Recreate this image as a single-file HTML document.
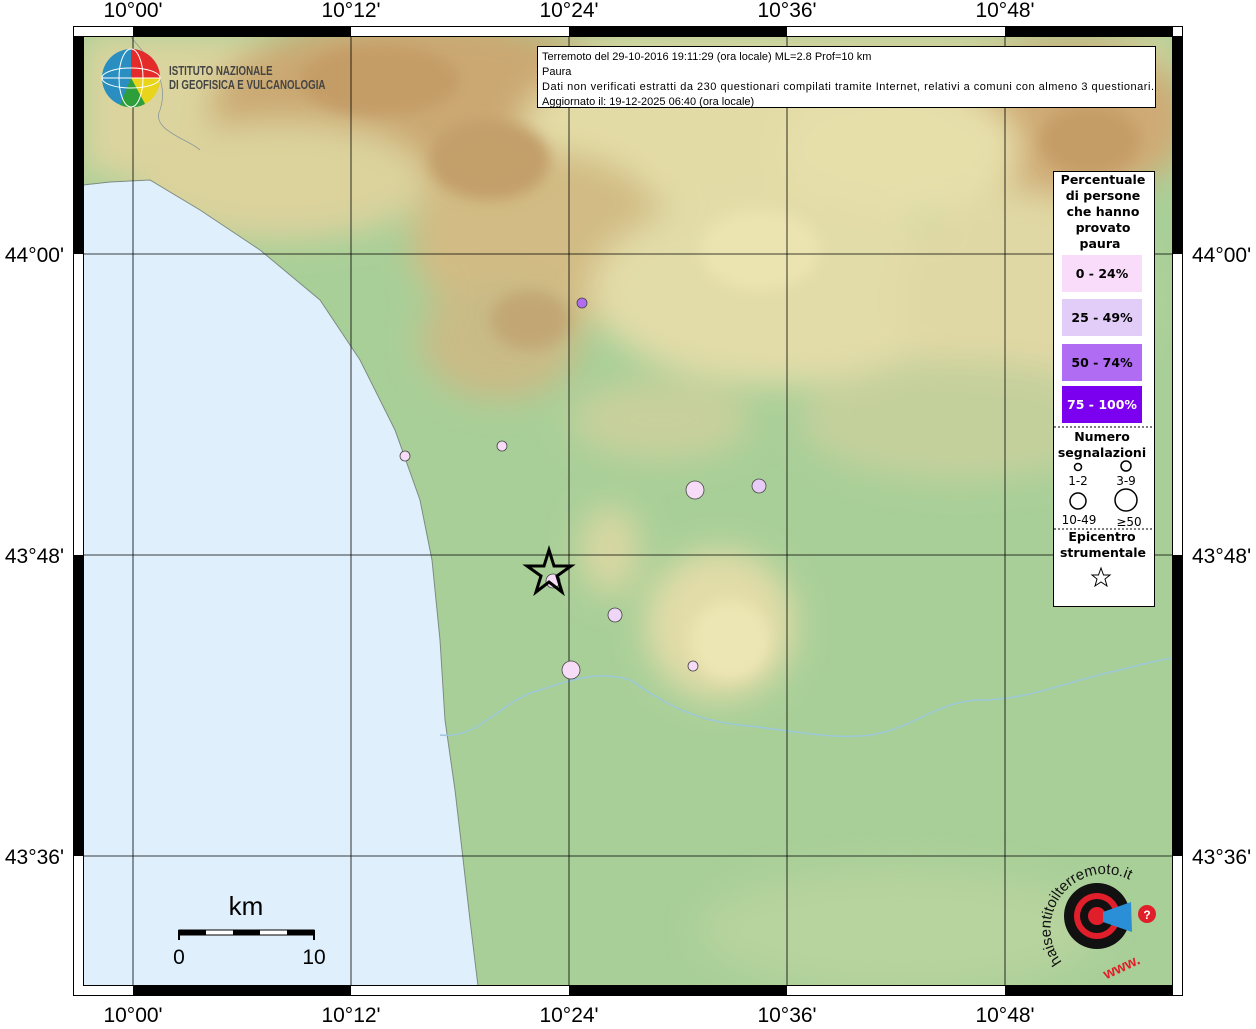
<!DOCTYPE html>
<html><head><meta charset="utf-8"><style>
body{margin:0;background:#fff;width:1256px;height:1024px;overflow:hidden;font-family:"Liberation Sans",sans-serif}
</style></head><body>
<svg width="1256" height="1024" viewBox="0 0 1256 1024" xmlns="http://www.w3.org/2000/svg" font-family="Liberation Sans, sans-serif">
<defs>
<filter id="b" x="-50%" y="-50%" width="200%" height="200%"><feGaussianBlur stdDeviation="16"/></filter>
<filter id="b2" x="-50%" y="-50%" width="200%" height="200%"><feGaussianBlur stdDeviation="7"/></filter>
<clipPath id="m"><rect x="83" y="36" width="1090" height="950"/></clipPath>
</defs>
<g clip-path="url(#m)">
<rect x="83" y="36" width="1090" height="950" fill="#a9cf98"/>
<g filter="url(#b)">
<rect x="83" y="36" width="1090" height="140" fill="#dcd49e"/>
<ellipse cx="420" cy="110" rx="210" ry="95" fill="#cba872"/>
<ellipse cx="700" cy="130" rx="180" ry="80" fill="#e3dba6"/>
<ellipse cx="1070" cy="120" rx="120" ry="80" fill="#cfaa74"/>
<ellipse cx="900" cy="150" rx="120" ry="70" fill="#e6dfaa"/>
<ellipse cx="540" cy="240" rx="130" ry="90" fill="#d2bb84"/>
<ellipse cx="780" cy="290" rx="190" ry="95" fill="#e2dca8"/>
<ellipse cx="1020" cy="300" rx="120" ry="110" fill="#e0d8a4"/>
<ellipse cx="280" cy="180" rx="150" ry="60" fill="#dbd29c"/>
<ellipse cx="500" cy="340" rx="80" ry="60" fill="#c9bb86"/>
<ellipse cx="660" cy="420" rx="90" ry="40" fill="#c8d09c"/>
<ellipse cx="960" cy="420" rx="160" ry="60" fill="#c4d09c"/>
<ellipse cx="720" cy="625" rx="75" ry="75" fill="#e2dca8"/>
<ellipse cx="610" cy="550" rx="30" ry="45" fill="#d8d7a2"/>
<ellipse cx="900" cy="930" rx="200" ry="60" fill="#b7d39e"/>
</g>
<g filter="url(#b2)">
<ellipse cx="380" cy="80" rx="80" ry="35" fill="#c49c66"/>
<ellipse cx="490" cy="160" rx="60" ry="40" fill="#c39f6a"/>
<ellipse cx="1090" cy="140" rx="50" ry="35" fill="#c49c66"/>
<ellipse cx="530" cy="320" rx="40" ry="30" fill="#c2a775"/>
<ellipse cx="730" cy="640" rx="40" ry="40" fill="#ece6b4"/>
<ellipse cx="760" cy="250" rx="60" ry="40" fill="#ebe4b0"/>
</g>
<path d="M83,36 L83,185 L110,182 L150,180 L200,210 L260,250 L320,300 L360,360 L395,430 L420,500 L432,560 L440,640 L445,720 L455,790 L462,850 L470,920 L478,986 L83,986 Z" fill="#dff0fc" stroke="#7d8c80" stroke-width="1"/>
<path d="M440,735 C480,740 500,700 540,690 C570,680 600,670 630,680 C660,700 690,720 740,725 C790,730 830,740 870,735 C910,730 940,700 980,700 C1030,700 1070,680 1120,670 C1150,662 1160,660 1173,658" fill="none" stroke="#9cc8d8" stroke-width="1.5"/>
<path d="M130,36 C150,60 170,80 160,110 C150,130 190,140 200,150" fill="none" stroke="#8a9a9a" stroke-width="0.8"/>
<g stroke="#000" stroke-width="0.8">
<line x1="133" y1="36" x2="133" y2="986"/><line x1="351" y1="36" x2="351" y2="986"/><line x1="569" y1="36" x2="569" y2="986"/><line x1="787" y1="36" x2="787" y2="986"/><line x1="1005" y1="36" x2="1005" y2="986"/>
<line x1="83" y1="254" x2="1173" y2="254"/><line x1="83" y1="555" x2="1173" y2="555"/><line x1="83" y1="856" x2="1173" y2="856"/>
</g>
</g>
<rect x="73.5" y="26.5" width="1109" height="969" fill="none" stroke="#000" stroke-width="1"/>
<rect x="83.5" y="36.5" width="1089" height="949" fill="none" stroke="#000" stroke-width="1"/>
<g fill="#000">
<rect x="133" y="26" width="218" height="10"/><rect x="569" y="26" width="218" height="10"/><rect x="1005" y="26" width="168" height="10"/>
<rect x="133" y="986" width="218" height="10"/><rect x="569" y="986" width="218" height="10"/><rect x="1005" y="986" width="168" height="10"/>
<rect x="73" y="36" width="10" height="218"/><rect x="73" y="555" width="10" height="301"/>
<rect x="1173" y="36" width="10" height="218"/><rect x="1173" y="555" width="10" height="301"/>
</g>
<g font-size="21" fill="#000">
<text x="133" y="17" text-anchor="middle">10°00'</text><text x="351" y="17" text-anchor="middle">10°12'</text><text x="569" y="17" text-anchor="middle">10°24'</text><text x="787" y="17" text-anchor="middle">10°36'</text><text x="1005" y="17" text-anchor="middle">10°48'</text>
<text x="133" y="1022" text-anchor="middle">10°00'</text><text x="351" y="1022" text-anchor="middle">10°12'</text><text x="569" y="1022" text-anchor="middle">10°24'</text><text x="787" y="1022" text-anchor="middle">10°36'</text><text x="1005" y="1022" text-anchor="middle">10°48'</text>
<text x="64" y="262" text-anchor="end">44°00'</text><text x="64" y="563" text-anchor="end">43°48'</text><text x="64" y="864" text-anchor="end">43°36'</text>
<text x="1192" y="262">44°00'</text><text x="1192" y="563">43°48'</text><text x="1192" y="864">43°36'</text>
</g>
<circle cx="131" cy="78" r="29" fill="#2a8fc0"/>
<path d="M131,49 A29,29 0 0 1 160,78 L131,78 Z" fill="#e52a2a"/>
<path d="M131,78 L160,78 A29,29 0 0 1 145,104 Z" fill="#e8d41a"/>
<path d="M131,78 L145,104 A29,29 0 0 1 120,105 Z" fill="#2e9e3b"/>
<g stroke="#fff" stroke-width="1" fill="none"><ellipse cx="131" cy="78" rx="12" ry="29"/><ellipse cx="131" cy="78" rx="29" ry="10"/><line x1="102" y1="78" x2="160" y2="78"/></g>
<g transform="translate(169,0) scale(0.78,1)" font-size="12.5" font-weight="bold" fill="#444">
<text x="0" y="75">ISTITUTO NAZIONALE</text>
<text x="0" y="89">DI GEOFISICA E VULCANOLOGIA</text>
</g>
<rect x="537.5" y="46.5" width="618" height="61" fill="#fff" stroke="#000"/>
<g font-size="11" fill="#000">
<text x="542" y="60">Terremoto del 29-10-2016 19:11:29 (ora locale) ML=2.8 Prof=10 km</text>
<text x="542" y="75">Paura</text>
<text x="542" y="90" textLength="612">Dati non verificati estratti da 230 questionari compilati tramite Internet, relativi a comuni con almeno 3 questionari.</text>
<text x="542" y="105">Aggiornato il: 19-12-2025 06:40 (ora locale)</text>
</g>
<g stroke="#444" stroke-width="0.8">
<circle cx="582" cy="303" r="5" fill="#b26cf0"/>
<circle cx="502" cy="446" r="5" fill="#f6dcf7"/>
<circle cx="405" cy="456" r="5" fill="#f6dcf7"/>
<circle cx="695" cy="490" r="9" fill="#f6dcf7"/>
<circle cx="759" cy="486" r="7" fill="#e6ccf7"/>
<circle cx="553" cy="581" r="7" fill="#f6dcf7"/>
<circle cx="615" cy="615" r="7" fill="#eed6f7"/>
<circle cx="693" cy="666" r="5" fill="#f6dcf7"/>
<circle cx="571" cy="670" r="9" fill="#f6dcf7"/>
</g>
<path d="M549,550 L554,566 L571,566 L557,576 L562,592 L549,582 L536,592 L541,576 L527,566 L544,566 Z" fill="none" stroke="#000" stroke-width="3"/>
<rect x="1053.5" y="171.5" width="101" height="435" fill="#fff" stroke="#000"/>
<g font-size="12.5" font-weight="bold" text-anchor="middle" fill="#000" font-family="DejaVu Sans, sans-serif">
<text x="1103" y="184">Percentuale</text><text x="1103" y="200">di persone</text><text x="1103" y="216">che hanno</text><text x="1103" y="232">provato</text><text x="1100" y="248">paura</text>
<rect x="1062" y="255" width="80" height="37" fill="#f8dcfa"/><text x="1102" y="278">0 - 24%</text>
<rect x="1062" y="299" width="80" height="37" fill="#e2ccf8"/><text x="1102" y="322">25 - 49%</text>
<rect x="1062" y="344" width="80" height="37" fill="#b06cf2"/><text x="1102" y="367">50 - 74%</text>
<rect x="1062" y="386" width="80" height="37" fill="#7b00f0"/><text x="1102" y="409" fill="#fff">75 - 100%</text>
<text x="1102" y="441">Numero</text><text x="1102" y="457">segnalazioni</text>
<text x="1102" y="541">Epicentro</text><text x="1103" y="557">strumentale</text>
</g>
<g stroke="#000" stroke-dasharray="2,2"><line x1="1054" y1="427" x2="1154" y2="427"/><line x1="1054" y1="529" x2="1154" y2="529"/></g>
<g fill="none" stroke="#000" stroke-width="1.5"><circle cx="1078" cy="467" r="3.5"/><circle cx="1126" cy="466" r="5"/><circle cx="1078" cy="501" r="8"/><circle cx="1126" cy="500" r="11"/></g>
<g font-size="12" text-anchor="middle" fill="#000" font-family="DejaVu Sans, sans-serif"><text x="1078" y="485">1-2</text><text x="1126" y="485">3-9</text><text x="1079" y="524">10-49</text><text x="1129" y="526">≥50</text></g>
<path d="M1101,568 L1103.5,575 L1110,575 L1105,579 L1107,586 L1101,582 L1095,586 L1097,579 L1092,575 L1098.5,575 Z" fill="none" stroke="#000" stroke-width="1"/>
<text x="246" y="915" font-size="26" text-anchor="middle">km</text>
<rect x="179" y="930" width="135" height="5" fill="#fff" stroke="#000"/>
<g fill="#000"><rect x="179" y="930" width="27" height="5"/><rect x="233" y="930" width="27" height="5"/><rect x="287" y="930" width="27" height="5"/></g>
<line x1="179" y1="930" x2="179" y2="940" stroke="#000" stroke-width="2"/><line x1="314" y1="930" x2="314" y2="940" stroke="#000" stroke-width="2"/>
<text x="179" y="964" font-size="21" text-anchor="middle">0</text><text x="314" y="964" font-size="21" text-anchor="middle">10</text>
<circle cx="1097" cy="916" r="33" fill="#111"/>
<circle cx="1097" cy="916" r="23" fill="#e01f2b"/>
<circle cx="1097" cy="916" r="17" fill="#111"/>
<circle cx="1097" cy="916" r="9" fill="#e01f2b"/>
<path d="M1103,912 L1131,902 L1132,932 L1103,922 Z" fill="#2a8fd6"/>
<circle cx="1147" cy="914" r="9" fill="#e01f2b"/>
<text x="1147" y="919" font-size="12" fill="#fff" text-anchor="middle" font-weight="bold">?</text>
<path id="arc" d="M1062,962 A50,50 0 1 1 1148,895" fill="none"/>
<text font-size="15" fill="#111"><textPath href="#arc">haisentitoilterremoto.it</textPath></text>
<text x="1100" y="972" font-size="15" font-weight="bold" fill="#e01f2b" transform="rotate(-25 1120 962)">www.</text>
</svg>
</body></html>
